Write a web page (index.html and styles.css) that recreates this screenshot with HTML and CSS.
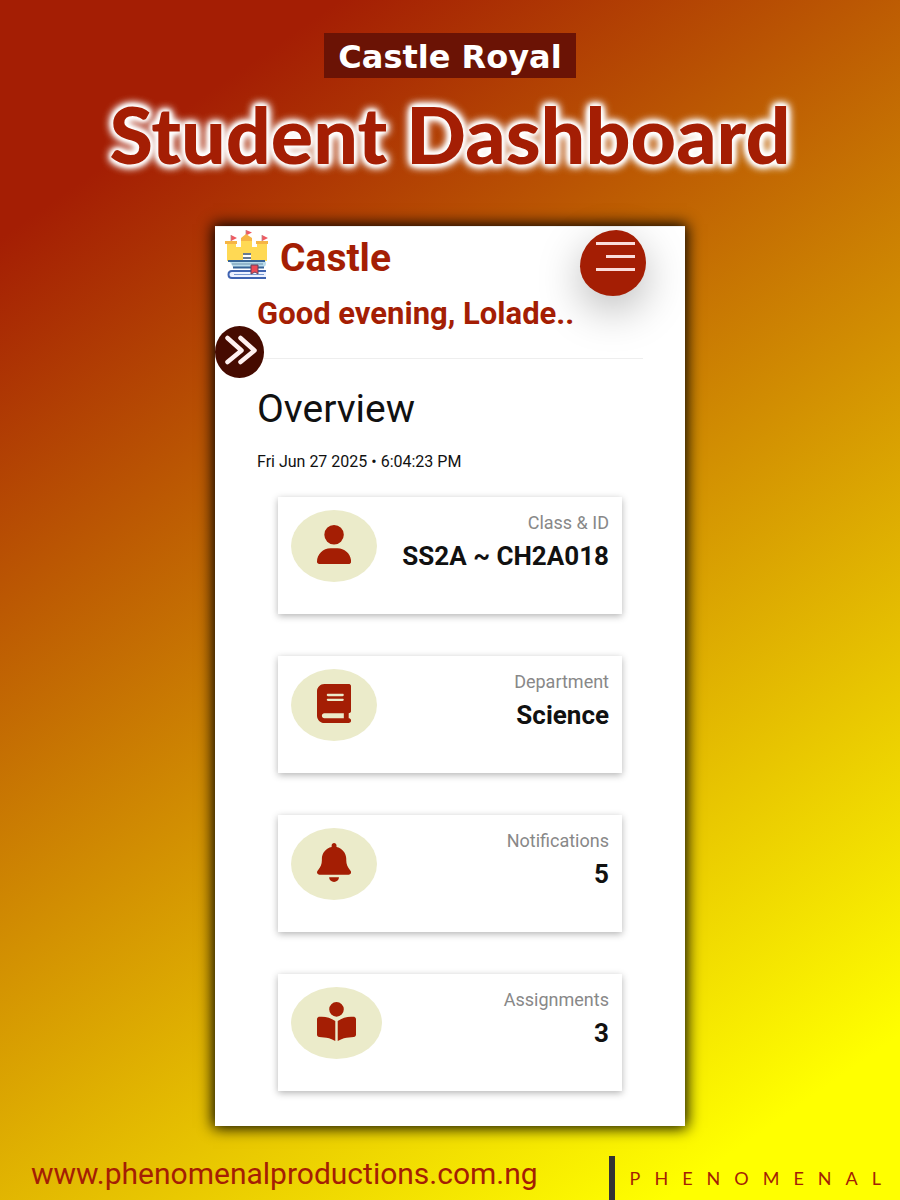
FILE: index.html
```
<!DOCTYPE html>
<html lang="en">
<head>
<meta charset="utf-8">
<meta name="viewport" content="width=device-width, initial-scale=1">
<title>Castle Royal - Student Dashboard</title>
<link rel="stylesheet" href="styles.css">
</head>
<body>
<header class="hero">
  <p class="school">Castle Royal</p>
  <h1 class="title">Student Dashboard</h1>
</header>

<main class="phone">
  <div class="topbar">
    <svg class="logo" viewBox="0 0 44 50" aria-hidden="true">
      <g fill="#ef5a62"><path d="M6 5l6 3-6 3zM21 0l6 2.500-6 3zM37 5l6 3-6 3z"/></g>
      <path d="M6 5v8M21 0v8M37 5v8" stroke="#b98a8a" stroke-width=".8"/>
      <path fill="#ffd954" d="M2 13h9v4h5V9h11v8h5v-4h10v18H2z"/>
      <path fill="#f6b545" d="M0 11h12v3H0zM16 8l5-4 6 4v3H16zM31 11h12v3H31z"/>
      <path fill="#fff" d="M18 23h8v7h-8z"/>
      <path d="M18 24h8M18 28h8" stroke="#38506e" stroke-width="1.500"/>
      <path d="M4 30.500h34q3 0 3 3t-3 3.500H8" fill="#b9dbea"/>
      <path d="M3 31h37M8 37.500h31" stroke="#376496" stroke-width="2"/>
      <path d="M7 34h31" stroke="#6d91ad"/>
      <path d="M41 41H7q-3.500 0-3.500 3.500T7 48h34" fill="#edf2ff" stroke="#3f63b1" stroke-width="2"/>
      <path d="M9 44.500h30" stroke="#7797cf"/>
      <path d="M26 35h7v9l-3-2-4 2z" fill="#ed4955" stroke="#65405d"/>
    </svg>
    <span class="brand">Castle</span>
    <button class="menu" type="button" aria-label="Menu"><span class="line"></span><span class="line short"></span><span class="line"></span></button>
  </div>

  <div class="content">
    <h2 class="greeting">Good evening, Lolade..</h2>
    <button class="expand" type="button" aria-label="Open sidebar">
      <svg viewBox="0 0 48 52" aria-hidden="true"><path d="M12 12l14 12.500L12 36M25 12l14 12.500L25 36" fill="none" stroke="#fff1f0" stroke-width="4.500" stroke-linecap="round" stroke-linejoin="round"/></svg>
    </button>
    <h3 class="section">Overview</h3>
    <time class="date" datetime="2025-06-27T18:04:23">Fri Jun 27 2025 • 6:04:23 PM</time>

    <section class="cards">
      <article class="card">
        <span class="badge"><svg class="icon" viewBox="0 0 448 512" aria-hidden="true"><path d="M224 256A128 128 0 1 0 224 0a128 128 0 1 0 0 256zm-45.700 48C79.800 304 0 383.800 0 482.300 0 498.700 13.300 512 29.700 512h388.600c16.400 0 29.700-13.300 29.700-29.700C448 383.800 368.200 304 269.700 304z"/></svg></span>
        <div class="info"><span class="label">Class &amp; ID</span><strong class="value">SS2A ~ CH2A018</strong></div>
      </article>
      <article class="card">
        <span class="badge"><svg class="icon" viewBox="0 0 448 512" aria-hidden="true"><path fill-rule="evenodd" d="M96 0C43 0 0 43 0 96v320c0 53 43 96 96 96h320c17.700 0 32-14.300 32-32s-14.300-32-32-32v-64c17.700 0 32-14.300 32-32V32c0-17.700-14.300-32-32-32zm0 384h256v64H96c-17.700 0-32-14.300-32-32s14.300-32 32-32zm32-240c0-8.800 7.200-16 16-16h192c8.800 0 16 7.200 16 16s-7.200 16-16 16H144c-8.800 0-16-7.200-16-16zm16 48h192c8.800 0 16 7.200 16 16s-7.200 16-16 16H144c-8.800 0-16-7.200-16-16s7.200-16 16-16z"/></svg></span>
        <div class="info"><span class="label">Department</span><strong class="value">Science</strong></div>
      </article>
      <article class="card">
        <span class="badge"><svg class="icon" viewBox="0 0 448 512" aria-hidden="true"><path d="M224 0c-17.700 0-32 14.300-32 32v19.200C119 66 64 130.600 64 208v18.800c0 47-17.300 92.400-48.500 127.600l-7.400 8.300c-8.400 9.400-10.400 22.900-5.300 34.400S19.400 416 32 416h384c12.600 0 24-7.400 29.200-18.900s3.100-25-5.300-34.400l-7.400-8.300C401.300 319.200 384 273.900 384 226.800V208c0-77.400-55-142-128-156.800V32c0-17.700-14.300-32-32-32zm45.300 493.300c12-12 18.700-28.300 18.700-45.300H160c0 17 6.700 33.300 18.700 45.300S207 512 224 512s33.300-6.700 45.300-18.700z"/></svg></span>
        <div class="info"><span class="label">Notifications</span><strong class="value">5</strong></div>
      </article>
      <article class="card">
        <span class="badge"><svg class="icon" viewBox="0 0 512 512" aria-hidden="true"><path d="M160 96a96 96 0 1 1 192 0 96 96 0 1 1-192 0zm80 152v264l-48.400-24.200c-20.900-10.400-43.500-17-66.800-19.300l-96-9.600C12.500 457.200 0 443.500 0 427V224c0-17.700 14.300-32 32-32h30.300c63.600 0 125.600 19.600 177.700 56zm32 264V248c52.100-36.400 114.100-56 177.700-56H480c17.700 0 32 14.300 32 32v203c0 16.400-12.500 30.200-28.800 31.800l-96 9.600c-23.200 2.300-45.900 8.900-66.800 19.300z"/></svg></span>
        <div class="info"><span class="label">Assignments</span><strong class="value">3</strong></div>
      </article>
    </section>
  </div>
</main>

<footer class="footer">
  <a class="site" href="#">www.phenomenalproductions.com.ng</a>
  <span class="maker">PHENOMENAL</span>
</footer>
</body>
</html>
```

FILE: styles.css
```
* { box-sizing: border-box; }
body {
  margin: 0;
  min-height: 100vh;
  display: flex;
  flex-direction: column;
  align-items: center;
  font-family: Roboto, "Liberation Sans", sans-serif;
  color: #111;
  background: linear-gradient(145deg, #a41e04 13%, #ff0 91%);
}
h1, h2, h3, p { margin: 0; }
button { border: 0; padding: 0; cursor: pointer; }
.hero {
  display: flex;
  flex-direction: column;
  align-items: center;
  padding-top: 33px;
}
.school {
  padding: 3px 14px 0;
  background: #6b1305;
  color: #fff;
  font: bold 32px/42px "DejaVu Sans", sans-serif;
}
.title {
  margin-top: 8px;
  color: #a41e04;
  font: 900 79px/96px Lato, sans-serif;
  text-align: center;
  text-shadow: 0 0 4px #fff, 0 0 5px #fff, 0 0 6px #fff, 0 0 8px #fff, 0 0 10px #fff, 0 0 12px #fff, 0 0 12px #fff;
}
.phone {
  position: relative;
  width: 100%;
  max-width: 470px;
  margin-top: 44px;
  padding-bottom: 35px;
  background: #fff;
  box-shadow: 0 0 14px 2px #000;
}
.topbar {
  display: flex;
  align-items: center;
  height: 64px;
  padding: 0 39px 0 10px;
  border-top: 1px solid #eee;
}
.logo { width: 44px; height: 50px; margin-top: -8px; }
.brand {
  margin-top: -2px;
  margin-left: 11px;
  color: #a41e04;
  font-size: 39px;
  font-weight: 700;
}
.menu {
  display: flex;
  flex-direction: column;
  align-items: flex-end;
  gap: 10px;
  align-self: flex-start;
  width: 66px;
  height: 66px;
  margin-top: 3px;
  margin-left: auto;
  padding: 12px 11px;
  border-radius: 55% 45% 50% 50% / 55% 50% 50% 45%;
  background: #a41e04;
  box-shadow: 0 14px 44px rgba(0, 0, 0, .28);
}
.line { width: 39px; height: 3px; background: #fbdcda; }
.short { width: 29px; }
.content { padding: 0 42px; }
.greeting {
  padding-bottom: 20px;
  border-bottom: 1px solid #eee;
  color: #a41e04;
  font-size: 31px;
  line-height: 48px;
}
.expand {
  position: absolute;
  left: 0;
  top: 100px;
  width: 49px;
  height: 52px;
  border-radius: 50%;
  background: #460b00;
}
.expand svg { display: block; width: 100%; height: 100%; }
.section { margin-top: 26px; font-size: 39px; font-weight: 400; line-height: 48px; }
.date { display: block; margin-top: 19px; font-size: 16px; line-height: 20px; }
.cards { display: flex; flex-direction: column; gap: 42px; padding: 25px 21px 0; }
.card {
  display: flex;
  justify-content: space-between;
  align-items: flex-start;
  min-height: 117px;
  padding: 13px;
  background: #fff;
  box-shadow: 0 2px 7px rgba(0, 0, 0, .3);
}
.badge { padding: 15px 26px 18px; border-radius: 50%; background: #ebebca; }
.icon { display: block; height: 39px; fill: #a41e04; }
.info { display: flex; flex-direction: column; align-items: flex-end; }
.label { color: #888; font-size: 18px; line-height: 26px; }
.value { font-size: 26px; line-height: 40px; }
.footer {
  display: flex;
  align-items: center;
  justify-content: space-between;
  width: 100%;
  margin-top: auto;
  padding: 0 5px 0 31px;
}
.site {
  padding-bottom: 8px;
  color: #a41e04;
  font: 30px/36px Roboto, sans-serif;
  text-decoration: none;
}
.maker {
  padding-left: 15px;
  border-left: 6px solid #333;
  color: #a41e04;
  font: 18px/44px Lato, sans-serif;
  letter-spacing: 14px;
}
```
